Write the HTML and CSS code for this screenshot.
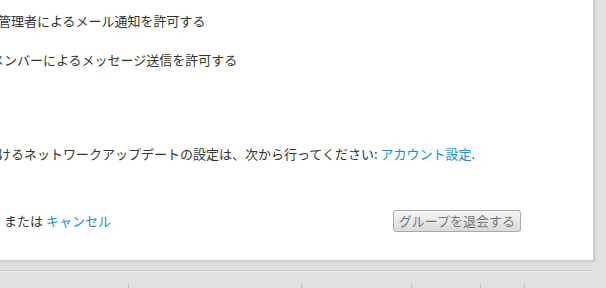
FILE: index.html
```html
<!DOCTYPE html>
<html lang="ja">
<head>
    <meta charset="UTF-8">
    <meta name="viewport" content="width=device-width, initial-scale=1.0">
    <title>グループ設定</title>
    <link rel="stylesheet" href="styles.css">
</head>
<body>
    <div class="panel">
        <div class="option option-first">管理者によるメール通知を許可する</div>
        <div class="option option-second">メンバーによるメッセージ送信を許可する</div>

        <p class="note">けるネットワークアップデートの設定は、次から行ってください: <a href="#">アカウント設定</a>.</p>

        <div class="actions">
            <span class="cancel">または <a href="#">キャンセル</a></span>
            <button class="leave-btn">グループを退会する</button>
        </div>
    </div>

    <div class="divider"></div>

    <ul class="footer-nav">
        <li><a href="#">Newsroom home</a></li>
        <li><a href="#">Community aroundl</a></li>
        <li><a href="#">mmmm</a></li>
        <li><a href="#">Sicon</a></li>
        <li><a href="#">van</a></li>
        <li><a href="#">ms</a></li>
    </ul>
</body>
</html>
```

FILE: styles.css
```css
html, body {
    margin: 0;
    padding: 0;
    overflow: hidden;
}
body {
    font-family: "Noto Sans CJK JP", "Liberation Sans", sans-serif;
    font-size: 13px;
    line-height: 20px;
    color: #333;
    background-color: #e0e0e0;
}
a {
    color: #1d8cc4;
    text-decoration: none;
}
.panel {
    box-sizing: border-box;
    width: 614px;
    margin: -10px 0 0 -20px;
    padding: 20px 72px 28px 17px;
    background-color: #fff;
    border: 1px solid #c9c9c9;
    box-shadow: 1px 1px 2px rgba(0,0,0,0.12);
}
.option {
    height: 20px;
    white-space: nowrap;
}
.option-second {
    margin: 19px 0 0 -7px;
}
.note {
    margin: 74px 0 0 0;
    white-space: nowrap;
}
.actions {
    display: flex;
    align-items: center;
    margin-top: 46px;
    height: 22px;
}
.cancel {
    margin-left: 6px;
}
.leave-btn {
    margin-left: auto;
    height: 22px;
    padding: 0 5px;
    white-space: nowrap;
    font-family: inherit;
    font-size: 13px;
    line-height: 20px;
    color: #777;
    background: linear-gradient(#f6f6f6, #dadada);
    border: 1px solid #a9a9a9;
    border-radius: 3px;
}
.divider {
    width: 593px;
    height: 1px;
    margin-top: 9px;
    background-color: #cdcdcd;
    border-bottom: 1px solid #ececec;
}
.footer-nav {
    display: flex;
    list-style: none;
    margin: 12px 0 0 0;
    padding: 0;
    font-family: "Liberation Sans", sans-serif;
    font-size: 12px;
    line-height: 20px;
}
.footer-nav li {
    padding: 2px 0 0 7px;
    border-left: 1px solid #c4c4c4;
    white-space: nowrap;
    overflow: hidden;
}
.footer-nav li:first-child {
    border-left: none;
    width: 121px;
}
.footer-nav li:nth-child(2) { width: 165px; }
.footer-nav li:nth-child(3) { width: 102px; }
.footer-nav li:nth-child(4) { width: 61px; }
.footer-nav li:nth-child(5) { width: 36px; }
```
